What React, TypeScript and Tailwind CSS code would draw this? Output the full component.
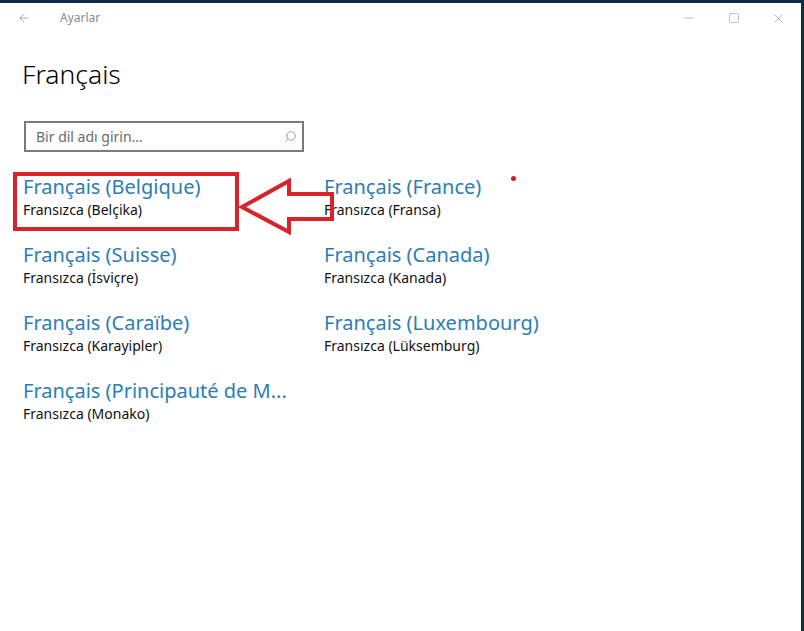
import { ArrowLeft, Minus, Square, X, Search } from "lucide-react";

const langs = [
  { name: "Français (Belgique)", sub: "Fransızca (Belçika)" },
  { name: "Français (France)", sub: "Fransızca (Fransa)" },
  { name: "Français (Suisse)", sub: "Fransızca (İsviçre)" },
  { name: "Français (Canada)", sub: "Fransızca (Kanada)" },
  { name: "Français (Caraïbe)", sub: "Fransızca (Karayipler)" },
  { name: "Français (Luxembourg)", sub: "Fransızca (Lüksemburg)" },
  { name: "Français (Principauté de M...", sub: "Fransızca (Monako)" },
];

export default function App() {
  return (
    <div
      className="w-[804px] h-[631px] bg-[#0d2b4b] pt-[3px] pr-[3px] overflow-hidden"
      style={{ fontFamily: '"Noto Sans", "Open Sans", sans-serif' }}
    >
      <div className="relative w-full h-full bg-white">
        {/* Title bar */}
        <div className="flex items-center h-[30px]">
          <div className="w-[48px] flex justify-center">
            <ArrowLeft className="w-[14px] h-[14px] text-[#8a8a8a]" strokeWidth={1.2} />
          </div>
          <span className="ml-[12px] text-[12px] text-[#8a8a8a]">Ayarlar</span>
          <div className="ml-auto flex h-full">
            <div className="w-[45px] flex items-center justify-center">
              <Minus className="w-[14px] h-[14px] text-[#8a8a8a]" strokeWidth={1} />
            </div>
            <div className="w-[45px] flex items-center justify-center">
              <Square className="w-[12px] h-[12px] text-[#8a8a8a]" strokeWidth={1} />
            </div>
            <div className="w-[45px] flex items-center justify-center">
              <X className="w-[15px] h-[15px] text-[#8a8a8a]" strokeWidth={1} />
            </div>
          </div>
        </div>

        {/* Content */}
        <div className="px-[22px]">
          <h1 className="mt-[24px] text-[26.5px] leading-[34px] font-light text-black">Français</h1>

          <div className="mt-[30px] ml-[2px] w-[280px] h-[31px] border-2 border-[#7a7a7a] flex items-center pl-[10px] pr-[5px]">
            <span className="text-[14px] text-[#6b6b6b]">Bir dil adı girin...</span>
            <Search className="ml-auto w-[13px] h-[13px] text-[#7a7a7a] -scale-x-100" strokeWidth={1.3} />
          </div>

          <div className="mt-[22px] ml-[1px] grid grid-cols-[301px_1fr] gap-y-[22px]">
            {langs.map((l) => (
              <div key={l.name} className="flex flex-col">
                <span className="text-[20px] leading-[26px] text-[#2b7db5] whitespace-nowrap">{l.name}</span>
                <span className="text-[14px] leading-[20px] text-[#111]">{l.sub}</span>
              </div>
            ))}
          </div>
        </div>

        {/* Annotations */}
        <div className="absolute left-[13px] top-[169px] w-[226px] h-[59px] border-[4px] border-[#d9232b]" />
        <svg className="absolute left-[236px] top-[172px]" width="102" height="60" viewBox="0 0 102 60">
          <path
            d="M6 32 L53 6 L53 19 L96 19 L96 44 L53 44 L53 57 Z"
            fill="none"
            stroke="#d9232b"
            strokeWidth="4"
            strokeLinejoin="miter"
          />
        </svg>
        <div className="absolute left-[511px] top-[173px] w-[5px] h-[5px] rounded-full bg-[#c8202a]" />
      </div>
    </div>
  );
}
